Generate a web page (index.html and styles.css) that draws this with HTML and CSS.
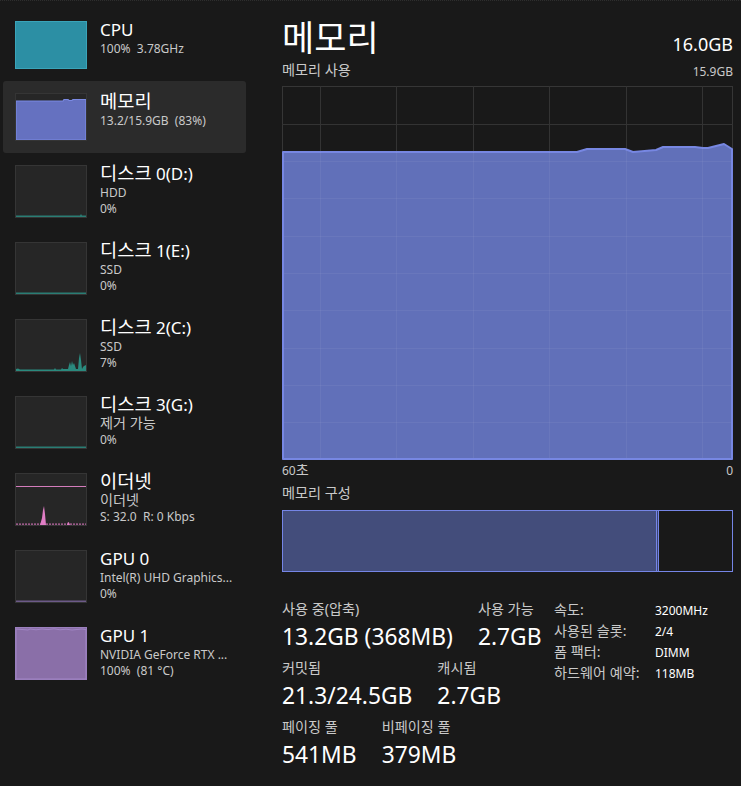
FILE: index.html
```html
<!DOCTYPE html>
<html lang="ko">
<head>
<meta charset="utf-8">
<title>작업 관리자 - 메모리</title>
<link rel="stylesheet" href="styles.css">
</head>
<body>
<nav class="sidebar">
  <div class="item">
    <div class="thumb cpu"></div>
    <div class="info">
      <div class="name">CPU</div>
      <div class="sub">100%&nbsp; 3.78GHz</div>
    </div>
  </div>
  <div class="item active">
    <div class="thumb">
      <svg viewBox="0 0 70 46" preserveAspectRatio="none"><polygon points="0,7 47,7 48,5.5 52,5.5 53,6.5 56,6.5 57,5.5 70,5.5 70,46 0,46" fill="#6571c0" stroke="#7b8ae3" stroke-width="1.2"/></svg>
    </div>
    <div class="info">
      <div class="name"><span class="ko">메모리</span></div>
      <div class="sub">13.2/15.9GB&nbsp; (83%)</div>
    </div>
  </div>
  <div class="item tall">
    <div class="thumb">
      <svg viewBox="0 0 70 51" preserveAspectRatio="none"><polygon points="0,49.5 64,49.5 65,48 66,49.5 70,49.5 70,51 0,51" fill="#2a7d74"/></svg>
    </div>
    <div class="info">
      <div class="name"><span class="ko">디스크</span> 0(D:)</div>
      <div class="sub">HDD</div>
      <div class="sub">0%</div>
    </div>
  </div>
  <div class="item tall">
    <div class="thumb">
      <svg viewBox="0 0 70 51" preserveAspectRatio="none"><rect x="0" y="49.5" width="70" height="1.5" fill="#2a7d74"/></svg>
    </div>
    <div class="info">
      <div class="name"><span class="ko">디스크</span> 1(E:)</div>
      <div class="sub">SSD</div>
      <div class="sub">0%</div>
    </div>
  </div>
  <div class="item tall">
    <div class="thumb">
      <svg viewBox="0 0 70 51" preserveAspectRatio="none"><polygon points="0,51 0,49 2,48.5 4,49.5 38,49.5 39,48 40,49.5 45,49.5 46,48 47,49 52,49 53,45 54,42 55,46 56,41 57,45 58,43 59,46 60,49 62,49 63,38 64,33 65,40 66,49 67,47 68,46 70,45 70,51" fill="#2a8a7e"/></svg>
    </div>
    <div class="info">
      <div class="name"><span class="ko">디스크</span> 2(C:)</div>
      <div class="sub">SSD</div>
      <div class="sub">7%</div>
    </div>
  </div>
  <div class="item tall">
    <div class="thumb">
      <svg viewBox="0 0 70 51" preserveAspectRatio="none"><rect x="0" y="49.5" width="70" height="1.5" fill="#2a7d74"/></svg>
    </div>
    <div class="info">
      <div class="name"><span class="ko">디스크</span> 3(G:)</div>
      <div class="sub"><span class="ko">제거 가능</span></div>
      <div class="sub">0%</div>
    </div>
  </div>
  <div class="item tall">
    <div class="thumb">
      <svg viewBox="0 0 70 51" preserveAspectRatio="none">
        <line x1="0" y1="12.5" x2="70" y2="12.5" stroke="#d47cbc" stroke-width="1.2"/>
        <line x1="0" y1="50.2" x2="70" y2="50.2" stroke="#c06aa8" stroke-width="1.2" stroke-dasharray="2 1"/>
        <polygon points="24,51 26,44 27,36 28,32 29,40 30,51" fill="#e07dc5"/>
        <polygon points="51,51 52,48 53,48.5 54,51" fill="#e07dc5"/>
      </svg>
    </div>
    <div class="info">
      <div class="name"><span class="ko">이더넷</span></div>
      <div class="sub"><span class="ko">이더넷</span></div>
      <div class="sub">S: 32.0&nbsp; R: 0 Kbps</div>
    </div>
  </div>
  <div class="item tall">
    <div class="thumb">
      <svg viewBox="0 0 70 51" preserveAspectRatio="none"><rect x="0" y="49.5" width="70" height="1.5" fill="#6c5a88"/></svg>
    </div>
    <div class="info">
      <div class="name">GPU 0</div>
      <div class="sub">Intel(R) UHD Graphics...</div>
      <div class="sub">0%</div>
    </div>
  </div>
  <div class="item tall">
    <div class="thumb gpu1">
      <svg viewBox="0 0 70 51" preserveAspectRatio="none"><polygon points="0,1 6,1.5 12,2 14,1 20,1.8 26,1 32,1.6 38,0.8 44,1.8 50,1.2 56,2 62,1.4 66,1 70,1.6 70,51 0,51" fill="#8a6fa8" stroke="#a286c6" stroke-width="1"/></svg>
    </div>
    <div class="info">
      <div class="name">GPU 1</div>
      <div class="sub">NVIDIA GeForce RTX ...</div>
      <div class="sub">100%&nbsp; (81 °C)</div>
    </div>
  </div>
</nav>

<main class="main">
  <header class="head">
    <h1 class="title">메모리</h1>
    <div class="total">16.0GB</div>
  </header>
  <div class="caption">
    <span class="ko">메모리 사용</span>
    <span>15.9GB</span>
  </div>
  <div class="graph">
    <svg viewBox="0 0 451 374" width="451" height="374">
      <rect x="0.5" y="0.5" width="450" height="373" fill="none" stroke="#363636"/>
      <g stroke="#333" stroke-width="1">
        <line x1="38.5" y1="0" x2="38.5" y2="374"/>
        <line x1="114.5" y1="0" x2="114.5" y2="374"/>
        <line x1="191.5" y1="0" x2="191.5" y2="374"/>
        <line x1="267.5" y1="0" x2="267.5" y2="374"/>
        <line x1="344.5" y1="0" x2="344.5" y2="374"/>
        <line x1="420.5" y1="0" x2="420.5" y2="374"/>
        <line x1="0" y1="38.5" x2="451" y2="38.5"/>
      </g>
      <polygon points="1,66 295,66 305,63 343,63 351,66 374,64 381,61 413,61 421,62 426,62 442,58 450,63 450,373 1,373" fill="#6170b9" stroke="#7787e2" stroke-width="2" stroke-linejoin="round"/>
      <g stroke="rgba(255,255,255,0.05)" stroke-width="1">
        <line x1="38.5" y1="66" x2="38.5" y2="372"/>
        <line x1="114.5" y1="66" x2="114.5" y2="372"/>
        <line x1="191.5" y1="66" x2="191.5" y2="372"/>
        <line x1="267.5" y1="66" x2="267.5" y2="372"/>
        <line x1="344.5" y1="63" x2="344.5" y2="372"/>
        <line x1="420.5" y1="62" x2="420.5" y2="372"/>
        <line x1="2" y1="75.5" x2="449" y2="75.5"/>
        <line x1="2" y1="112.5" x2="449" y2="112.5"/>
        <line x1="2" y1="150.5" x2="449" y2="150.5"/>
        <line x1="2" y1="187.5" x2="449" y2="187.5"/>
        <line x1="2" y1="224.5" x2="449" y2="224.5"/>
        <line x1="2" y1="262.5" x2="449" y2="262.5"/>
        <line x1="2" y1="299.5" x2="449" y2="299.5"/>
        <line x1="2" y1="336.5" x2="449" y2="336.5"/>
      </g>
    </svg>
  </div>
  <div class="axis">
    <span>60<span class="ko">초</span></span>
    <span>0</span>
  </div>
  <div class="section"><span class="ko">메모리 구성</span></div>
  <div class="compose">
    <div class="seg inuse"></div>
    <div class="seg modified"></div>
    <div class="seg rest"></div>
  </div>

  <section class="stats">
    <div class="stats-left">
      <div class="srow">
        <div class="stat"><div class="lbl"><span class="ko">사용 중(압축)</span></div><div class="val">13.2GB (368MB)</div></div>
        <div class="stat"><div class="lbl"><span class="ko">사용 가능</span></div><div class="val">2.7GB</div></div>
      </div>
      <div class="srow">
        <div class="stat"><div class="lbl"><span class="ko">커밋됨</span></div><div class="val">21.3/24.5GB</div></div>
        <div class="stat"><div class="lbl"><span class="ko">캐시됨</span></div><div class="val">2.7GB</div></div>
      </div>
      <div class="srow">
        <div class="stat"><div class="lbl"><span class="ko">페이징 풀</span></div><div class="val">541MB</div></div>
        <div class="stat"><div class="lbl"><span class="ko">비페이징 풀</span></div><div class="val">379MB</div></div>
      </div>
    </div>
    <dl class="props">
      <dt><span class="ko">속도:</span></dt><dd>3200MHz</dd>
      <dt><span class="ko">사용된 슬롯:</span></dt><dd>2/4</dd>
      <dt><span class="ko">폼 팩터:</span></dt><dd>DIMM</dd>
      <dt><span class="ko">하드웨어 예약:</span></dt><dd>118MB</dd>
    </dl>
  </section>
</main>
</body>
</html>
```
FILE: styles.css
```css
* { box-sizing: border-box; margin: 0; padding: 0; }
html, body { height: 100%; }
body {
  background: #191919;
  color: #ffffff;
  font-family: "Noto Sans", "Noto Sans CJK KR", sans-serif;
  display: flex;
  border-top: 1px dotted #2e2e2e;
  overflow: hidden;
}

/* Hangul runs are drawn a little larger, as the Korean UI font does */
.ko { font-size: 1.18em; line-height: 1; }
.name .ko { font-size: 1.1em; }

/* sidebar */
.sidebar { width: 246px; flex: none; padding: 8px 0 0 3px; }
.item {
  display: flex;
  gap: 13px;
  padding: 12px 0 12px 12px;
  border-radius: 3px;
}
.item.active { background: #2b2b2b; }
.thumb {
  width: 72px;
  height: 48px;
  flex: none;
  background: #262626;
  border: 1px solid #353535;
  overflow: hidden;
}
.item.tall .thumb { height: 53px; }
.thumb svg { display: block; width: 100%; height: 100%; }
.thumb.cpu { background: #2c8fa4; border-color: #3aa4b9; }
.thumb.gpu1 { background: #8a6fa8; border-color: #9a7fbd; }
.info { margin-top: -2px; min-width: 0; }
.name { font-size: 17px; line-height: 22px; white-space: nowrap; }
.sub { font-size: 12px; line-height: 16px; color: #c9c9c9; white-space: nowrap; }

/* main */
.main { width: 451px; flex: none; margin-left: 36px; padding-top: 17px; }
.head { display: flex; justify-content: space-between; align-items: baseline; }
.title { font-size: 35px; line-height: 40px; font-weight: 400; }
.total { font-size: 18px; }
.caption, .axis {
  display: flex;
  justify-content: space-between;
  font-size: 12px;
  line-height: 18px;
  color: #c9c9c9;
}
.caption { margin-top: 5px; }
.graph { margin-top: 5px; height: 374px; }
.graph svg { display: block; }
.axis { margin-top: 2px; }
.section { margin-top: 5px; font-size: 12px; line-height: 18px; color: #c9c9c9; }
.compose {
  margin-top: 7px;
  height: 62px;
  display: flex;
  border: 1px solid #7585e6;
}
.seg { height: 100%; }
.inuse { width: 374px; background: #434d7b; border-right: 1px solid #7585e6; }
.modified { width: 1px; background: #3a4470; }
.rest { flex: 1; border-left: 1px solid #7585e6; }

/* stats */
.stats { margin-top: 28px; display: flex; }
.stats-left { flex: 1; }
.srow { display: flex; gap: 25px; margin-bottom: 5px; }
.lbl { font-size: 12px; line-height: 20px; color: #c9c9c9; white-space: nowrap; }
.val { font-size: 22.8px; line-height: 34px; white-space: nowrap; }
.props {
  width: 179px;
  flex: none;
  display: grid;
  grid-template-columns: 101px 1fr;
  grid-auto-rows: 21px;
  font-size: 12px;
  line-height: 21px;
}
.props dt { color: #c9c9c9; white-space: nowrap; }
.props dd { color: #ffffff; }
```
